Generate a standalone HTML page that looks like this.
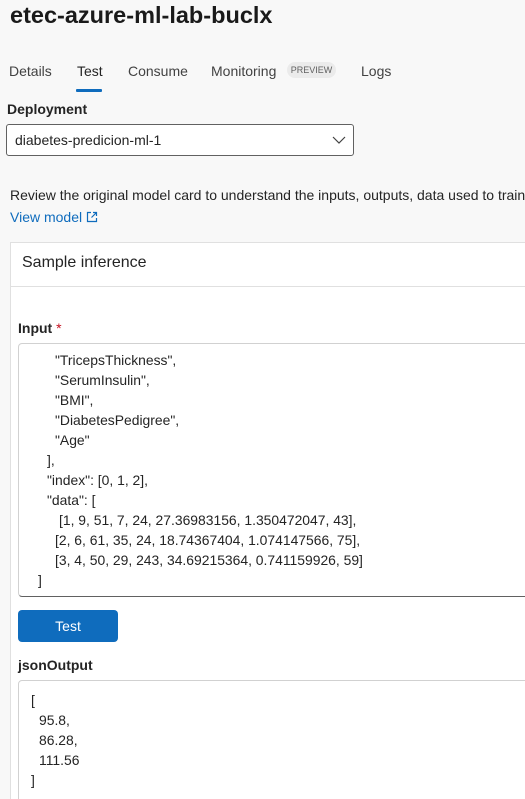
<!DOCTYPE html>
<html style="width:525px;height:799px;overflow:hidden"><head><meta charset="utf-8"><style>
*{margin:0;padding:0;box-sizing:border-box}
body{width:525px;height:799px;overflow:hidden;background:#f8f8f8;font-family:"Liberation Sans",sans-serif;color:#242424;position:relative;font-size:14px}
.a{position:absolute;white-space:nowrap}
.tab{top:63px;font-size:14px;color:#424242}
.code{font-size:13.9px;line-height:20px;color:#242424}
</style></head><body>
<div class="a" style="left:10px;top:2px;font-size:23.5px;font-weight:bold;color:#1a1a1a">etec-azure-ml-lab-buclx</div>
<div class="a tab" style="left:9px">Details</div>
<div class="a tab" style="left:77px;color:#242424">Test</div>
<div class="a" style="left:76px;top:89px;width:26px;height:3px;background:#0f6cbd;border-radius:1px"></div>
<div class="a tab" style="left:128px">Consume</div>
<div class="a tab" style="left:211px">Monitoring</div>
<div class="a" style="left:287px;top:62px;width:49px;height:16px;background:#ebebeb;border-radius:8px;font-size:9px;color:#616161;text-align:center;line-height:16px">PREVIEW</div>
<div class="a tab" style="left:361px">Logs</div>
<div class="a" style="left:7px;top:101px;font-size:14px;font-weight:bold">Deployment</div>
<div class="a" style="left:6px;top:124px;width:348px;height:32px;border:1px solid #616161;border-radius:3px;background:#fff"></div>
<div class="a" style="left:15px;top:132px;font-size:14px">diabetes-predicion-ml-1</div>
<svg class="a" style="left:332px;top:135px" width="14" height="10"><path d="M1 2 L7 8 L13 2" fill="none" stroke="#424242" stroke-width="1.2"/></svg>
<div class="a" style="left:10px;top:187px;font-size:14px">Review the original model card to understand the inputs, outputs, data used to train</div>
<div class="a" style="left:10px;top:209px;font-size:14px;color:#0f6cbd">View model</div>
<svg class="a" style="left:86px;top:211px" width="12" height="12"><path d="M5 1.5H1.5V10.5H10.5V7M7 1.5H10.5V5M10.5 1.5L5.5 6.5" fill="none" stroke="#0f6cbd" stroke-width="1.2"/></svg>
<div class="a" style="left:10px;top:242px;width:530px;height:570px;background:#fff;border:1px solid #e0e0e0"></div>
<div class="a" style="left:10px;top:286px;width:530px;height:1px;background:#e0e0e0"></div>
<div class="a" style="left:22px;top:254px;font-size:16px">Sample inference</div>
<div class="a" style="left:18px;top:320px;font-size:14px;font-weight:bold">Input <span style="color:#c50f1f;font-weight:normal">*</span></div>
<div class="a" style="left:18px;top:343px;width:520px;height:254px;border:1px solid #d1d1d1;border-bottom:1px solid #616161;border-radius:4px;background:#fff"></div>
<div class="a code" style="left:38px;top:350px">
<div style="padding-left:17px">"TricepsThickness",</div>
<div style="padding-left:17px">"SerumInsulin",</div>
<div style="padding-left:17px">"BMI",</div>
<div style="padding-left:17px">"DiabetesPedigree",</div>
<div style="padding-left:17px">"Age"</div>
<div style="padding-left:9px">],</div>
<div style="padding-left:9px">"index": [0, 1, 2],</div>
<div style="padding-left:9px">"data": [</div>
<div style="padding-left:21px">[1, 9, 51, 7, 24, 27.36983156, 1.350472047, 43],</div>
<div style="padding-left:17px">[2, 6, 61, 35, 24, 18.74367404, 1.074147566, 75],</div>
<div style="padding-left:17px">[3, 4, 50, 29, 243, 34.69215364, 0.741159926, 59]</div>
<div style="padding-left:0">]</div>
</div>
<div class="a" style="left:18px;top:610px;width:100px;height:32px;background:#0f6cbd;border-radius:4px;color:#fff;font-size:14px;text-align:center;line-height:32px">Test</div>
<div class="a" style="left:18px;top:657px;font-size:14px;font-weight:bold">jsonOutput</div>
<div class="a" style="left:18px;top:680px;width:520px;height:130px;border:1px solid #d1d1d1;border-radius:4px;background:#fff"></div>
<div class="a code" style="left:31px;top:690px">
<div>[</div>
<div style="padding-left:8px">95.8,</div>
<div style="padding-left:8px">86.28,</div>
<div style="padding-left:8px">111.56</div>
<div>]</div>
</div>
</body></html>
